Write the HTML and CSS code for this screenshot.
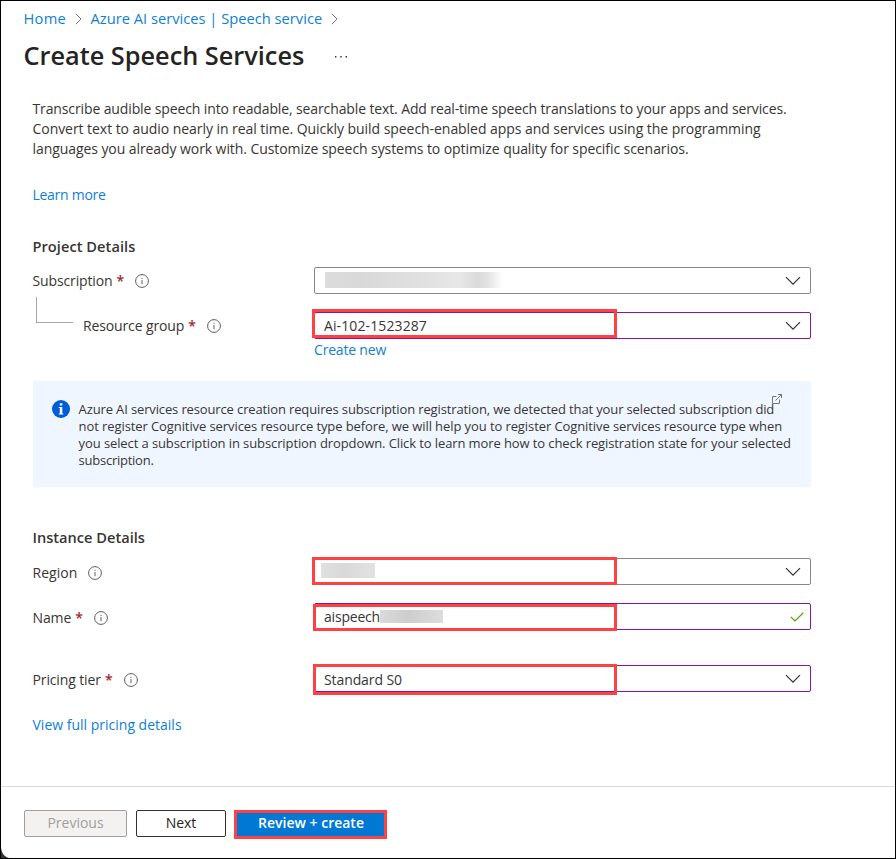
FILE: index.html
```
<!DOCTYPE html>
<html lang="en">
<head>
<meta charset="utf-8">
<title>Create Speech Services</title>
<link rel="stylesheet" href="styles.css">
</head>
<body>
<svg class="defs" width="0" height="0" aria-hidden="true">
  <symbol id="info" viewBox="0 0 14 14"><circle cx="7" cy="7" r="6.4" fill="none" stroke="currentColor" stroke-width="1"/><path d="M7 6v4.2M7 3.8v1.1" fill="none" stroke="currentColor" stroke-width="1"/></symbol>
  <symbol id="down" viewBox="0 0 16 10"><path d="M1 1.2l7 7 7-7" fill="none" stroke="currentColor" stroke-width="1.2"/></symbol>
  <symbol id="right" viewBox="0 0 7 12"><path d="M.8 .8L6 6 .8 11.2" fill="none" stroke="currentColor" stroke-width="1"/></symbol>
</svg>
<div class="window">
  <nav class="crumbs">
    <a class="home">Home</a><svg class="sep"><use href="#right"/></svg>
    <a>Azure AI services | Speech service</a><svg class="sep"><use href="#right"/></svg>
  </nav>
  <header class="title">
    <h1>Create Speech Services</h1>
    <svg class="more" viewBox="0 0 14 2"><path d="M1 0h1.4v1.4H1zM6.3 0h1.4v1.4H6.3zM11.6 0H13v1.4h-1.4z"/></svg>
  </header>
  <main class="form">
    <div class="desc">
      <div class="d1">Transcribe audible speech into readable, searchable text. Add real-time speech translations to your apps and services.</div>
      <div class="d2">Convert text to audio nearly in real time. Quickly build speech-enabled apps and services using the programming</div>
      <div class="d3">languages you already work with. Customize speech systems to optimize quality for specific scenarios.</div>
    </div>
    <a class="link learn">Learn more</a>

    <h2 class="project">Project Details</h2>
    <div class="row subscription">
      <label>Subscription <b>*</b><svg class="info"><use href="#info"/></svg></label>
      <div class="field"><span class="redacted wide"></span><svg class="down"><use href="#down"/></svg></div>
    </div>
    <div class="row group">
      <label><i class="elbow"></i>Resource group <b>*</b><svg class="info"><use href="#info"/></svg></label>
      <div class="field edited"><span class="id">Ai-102-1523287</span><svg class="down"><use href="#down"/></svg><i class="mark mark-group"></i></div>
    </div>
    <a class="link create">Create new</a>

    <section class="notice">
      <svg class="badge" viewBox="0 0 18 18"><circle cx="9" cy="9" r="9" fill="#015cda"/><path d="M7.8 3.2h2.5v2.3H7.8zM6.8 7h3.5v6.6h1v1H6.8v-1h1V8h-1z" fill="#fff"/></svg>
      <div class="notice-text">
        <div class="n1">Azure AI services resource creation requires subscription registration, we detected that your selected subscription did</div>
        <div class="n2">not register Cognitive services resource type before, we will help you to register Cognitive services resource type when</div>
        <div class="n3">you select a subscription in subscription dropdown. Click to learn more how to check registration state for your selected</div>
        <div class="n4">subscription.</div>
      </div>
      <svg class="external" viewBox="0 0 10 10"><path d="M4.5 2.5h-4v7h7v-4M3.5 6.5l6-6M6 .5h3.5V4" fill="none" stroke="#666" stroke-width=".9"/></svg>
    </section>

    <h2 class="instance">Instance Details</h2>
    <div class="row region">
      <label>Region<svg class="info"><use href="#info"/></svg></label>
      <div class="field"><span class="redacted short"></span><svg class="down"><use href="#down"/></svg><i class="mark mark-region"></i></div>
    </div>
    <div class="row name">
      <label>Name <b>*</b><svg class="info"><use href="#info"/></svg></label>
      <div class="field edited"><span class="value">aispeech</span><span class="redacted suffix"></span>
        <svg class="check" viewBox="0 0 14 10"><path d="M.8 4.9l4.2 4L13.3.7" fill="none" stroke="#57a300" stroke-width="1.2"/></svg><i class="mark mark-name"></i></div>
    </div>
    <div class="row tier">
      <label>Pricing tier <b>*</b><svg class="info"><use href="#info"/></svg></label>
      <div class="field edited"><span class="plan">Standard S0</span><svg class="down"><use href="#down"/></svg><i class="mark mark-tier"></i></div>
    </div>
    <a class="link pricing">View full pricing details</a>
  </main>
  <footer class="actions">
    <button class="previous" disabled>Previous</button>
    <button class="next">Next</button>
    <button class="review">Review + create</button>
  </footer>
  <svg class="corner" viewBox="0 0 8 10"><path d="M0 0Q1 8 8 10H0z"/></svg>
</div>
</body>
</html>
```
FILE: styles.css
```
* { box-sizing: border-box; }
body { margin: 0; background: #fff; color: #373634; font: 14px/20px "Open Sans", "Noto Sans", sans-serif; }
.defs { position: absolute; }
.window { position: relative; height: 859px; border: 1px solid #000; overflow: hidden; white-space: nowrap; }
svg { display: block; flex: none; }
a { color: #0f7fd6; }

.crumbs { display: flex; align-items: center; height: 36px; padding: 0 0 2px 22.6px; font-size: 14.7px; }
.crumbs .home { letter-spacing: .2px; }
.sep { width: 7px; height: 12px; margin: 1px 9px 0 8.6px; color: #797775; }
.title { display: flex; align-items: center; height: 38px; padding: 0 0 2px 22.5px; }
h1 { margin: 0; width: 310px; font-size: 25.3px; line-height: 38px; font-weight: 600; color: #252423; }
.more { width: 14px; height: 2px; margin-top: 4px; fill: #323130; }

.form { width: 810px; padding: 24px 0 0 31.5px; height: 711px; }
.d1 { letter-spacing: -.122px; }
.d2 { letter-spacing: -.053px; }
.d3 { letter-spacing: -.076px; }
.link { display: block; }
.learn { margin-top: 26px; letter-spacing: -.28px; }
h2 { margin: 0; font-size: 14.6px; line-height: 20px; font-weight: 600; }
.project { margin-top: 31px; letter-spacing: .05px; }
.instance { margin-top: 40px; }

.row { display: flex; height: 27px; }
label { display: flex; align-items: center; width: 281.5px; letter-spacing: -.13px; white-space: pre; }
label b { margin-left: .6px; color: #a4262c; font-weight: 600; }
.info { width: 14px; height: 14px; margin-left: 11px; color: #605e5c; }
.subscription { margin-top: 11px; }
.subscription .info { margin-left: 10.4px; }
.group { margin-top: 18px; }
.region { margin-top: 11px; }
.name { margin-top: 18px; }
.tier { margin-top: 35px; }
.region label, .name label, .tier label { padding-top: 2px; }
.region label .info { margin-left: 10.6px; }
.tier label .info { margin-left: 11.4px; }
.elbow { width: 37px; height: 26px; margin: -31px 10px 0 3.5px; border: solid #a9a7a5; border-width: 0 0 1px 1px; }
.region label { letter-spacing: .05px; }

.field { position: relative; display: flex; align-items: center; width: 497px; height: 27px; padding-left: 9px; border: 1px solid #8a8886; border-radius: 2px; letter-spacing: -.1px; }
.edited { border-color: #881798; }
.value { letter-spacing: -.2px; }
.id { letter-spacing: .11px; }
.plan { padding-top: 2px; }
.down { width: 16px; height: 10px; margin: 1px 9px 0 auto; color: #323130; }
.check { width: 14px; height: 10px; margin: 0 6px 0 auto; }
.redacted { height: 16px; }
.wide { width: 178px; margin-top: -2px; margin-left: 1px; background: linear-gradient(90deg, #dcdcdc, #d9d9d9 20%, #e2e2e2 60%, #e8e8e8 75%, #dadada 86%, #e4e4e4 92%, #fff); }
.short { width: 54px; height: 15px; margin: -2px 0 0 -3px; background: linear-gradient(90deg, #e0e0e0, #d9d9d9 40%, #e2e2e2); }
.suffix { width: 63px; height: 13px; margin-top: -1px; background: linear-gradient(90deg, #dadada, #cdcdcd 45%, #ddd); }

.mark { position: absolute; border: 3px solid #fd4144; }
.mark-group { left: -3px; top: -4px; width: 305px; height: 29px; }
.mark-region { left: -3px; top: -2px; width: 305px; height: 28px; }
.mark-name { left: -2px; top: 0; width: 304px; height: 27px; }
.mark-tier { left: -2px; top: -2px; width: 304px; height: 31px; }

.create { margin: 1px 0 0 281.5px; letter-spacing: -.19px; }
.pricing { margin-top: 23px; }

.notice { position: relative; display: flex; width: 778px; height: 106px; margin: 21px 0 0 .5px; padding: 19px 0 0 19px; background: #f0f6ff; border-radius: 2px; font-size: 13px; line-height: 17px; }
.badge { width: 18px; height: 18px; margin-right: 8.6px; }
.notice-text { padding-top: 1px; }
.n1 { letter-spacing: -.132px; }
.n2 { letter-spacing: -.09px; }
.n3 { letter-spacing: -.1px; }
.n4 { letter-spacing: -.25px; }
.external { position: absolute; left: 739px; top: 13px; width: 10px; height: 10px; }

.actions { display: flex; gap: 10px; height: 72px; padding: 23px 0 0 23px; border-top: 1px solid #dcdbda; }
button { height: 27px; padding: 0 0 2px; border: 1px solid #323130; border-radius: 2px; background: #fff; color: #252423; font: 14px/23px "Open Sans", sans-serif; }
.previous { width: 103px; background: #f3f2f1; border-color: #a19f9d; color: #a19f9d; }
.next { width: 90px; margin-left: -1px; }
.review { width: 153px; height: 29px; margin-left: -2px; padding: 0 0 3px 1px; border: 3px solid #fd4144; border-radius: 0; background: #0078d4; color: #fff; font-weight: 600; line-height: 20px; }
.corner { position: absolute; left: 0; bottom: 0; width: 8px; height: 10px; fill: #333; }
```
